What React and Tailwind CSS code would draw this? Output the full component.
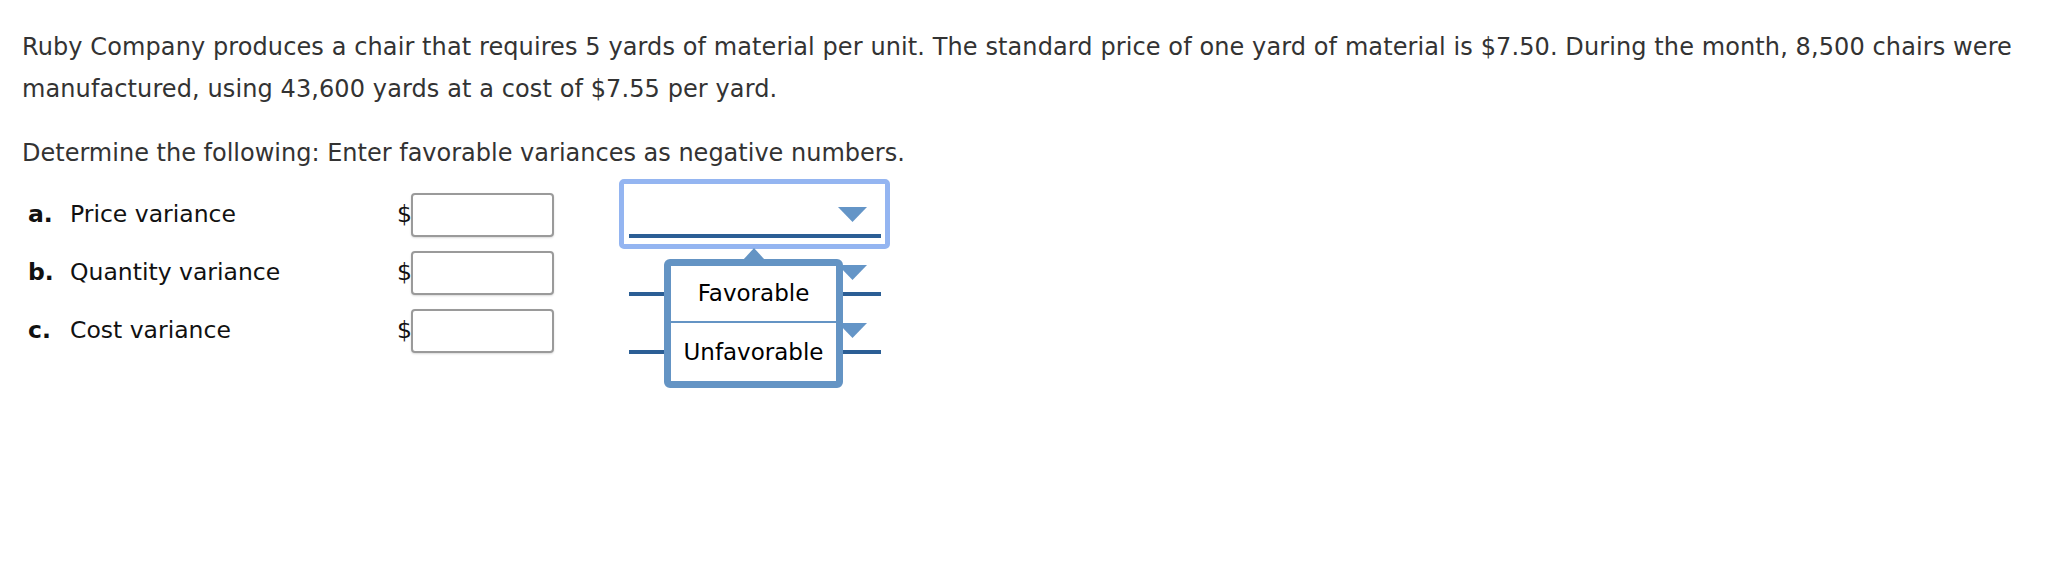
import React from "react";

const rows = [
  { key: "a.", label: "Price variance" },
  { key: "b.", label: "Quantity variance" },
  { key: "c.", label: "Cost variance" },
];

function Caret() {
  return (
    <svg width="29" height="15" viewBox="0 0 29 15" className="absolute right-[14px] bottom-[16px]">
      <path d="M0 0 H29 L14.5 15 Z" fill="#6495c7" />
    </svg>
  );
}

function Dropdown({ open }) {
  return (
    <div className="relative ml-[75px] w-[252px] h-[46px] self-center">
      {open && (
        <div className="absolute -left-[10px] -right-[9px] -top-[13px] -bottom-[11px] border-[5px] border-[#94b5f1] rounded-[5px]" />
      )}
      <Caret />
      <div className="absolute left-0 right-0 bottom-0 h-[4px] bg-[#2b5e95]" />
      {open && (
        <div className="absolute left-[35px] top-[67px] z-10 w-[179px]">
          <div className="absolute left-1/2 -translate-x-1/2 -top-[11px] w-0 h-0 border-l-[11px] border-r-[11px] border-b-[12px] border-l-transparent border-r-transparent border-b-[#6494c4]" />
          <div className="border-[7px] border-[#6494c4] rounded-[6px] bg-white text-black text-[23px]">
            <div className="h-[57px] flex items-center justify-center border-b-2 border-[#6494c4]">
              Favorable
            </div>
            <div className="h-[58px] flex items-center justify-center">
              Unfavorable
            </div>
          </div>
        </div>
      )}
    </div>
  );
}

export default function App() {
  return (
    <div
      className="w-[2068px] h-[568px] bg-white text-[#333] px-[22px] pt-[26px]"
      style={{ fontFamily: '"DejaVu Sans", Verdana, sans-serif' }}>
      <p className="text-[24px] leading-[42px] w-[2020px] tracking-[0.1px]">
        Ruby Company produces a chair that requires 5 yards of material per
        unit. The standard price of one yard of material is $7.50. During the
        month, 8,500 chairs were manufactured, using 43,600 yards at a cost of
        $7.55 per yard.
      </p>
      <p className="text-[24px] leading-[42px] mt-[22px]">
        Determine the following: Enter favorable variances as negative numbers.
      </p>
      <div className="mt-[12px] pl-[6px] text-[23.5px] text-[#111]">
        {rows.map((r, i) => (
          <div key={r.key} className="flex items-center h-[58px]">
            <div className="w-[369px] flex items-center">
              <span className="w-[42px] font-bold">{r.key}</span>
              <span>{r.label}</span>
            </div>
            <span className="w-[14px]">$</span>
            <div className="w-[143px] h-[44px] border-2 border-[#9a9a9a] rounded-[4px] bg-white shadow-[0_1px_2px_rgba(0,0,0,0.15)]" />
            <Dropdown open={i === 0} />
          </div>
        ))}
      </div>
    </div>
  );
}
